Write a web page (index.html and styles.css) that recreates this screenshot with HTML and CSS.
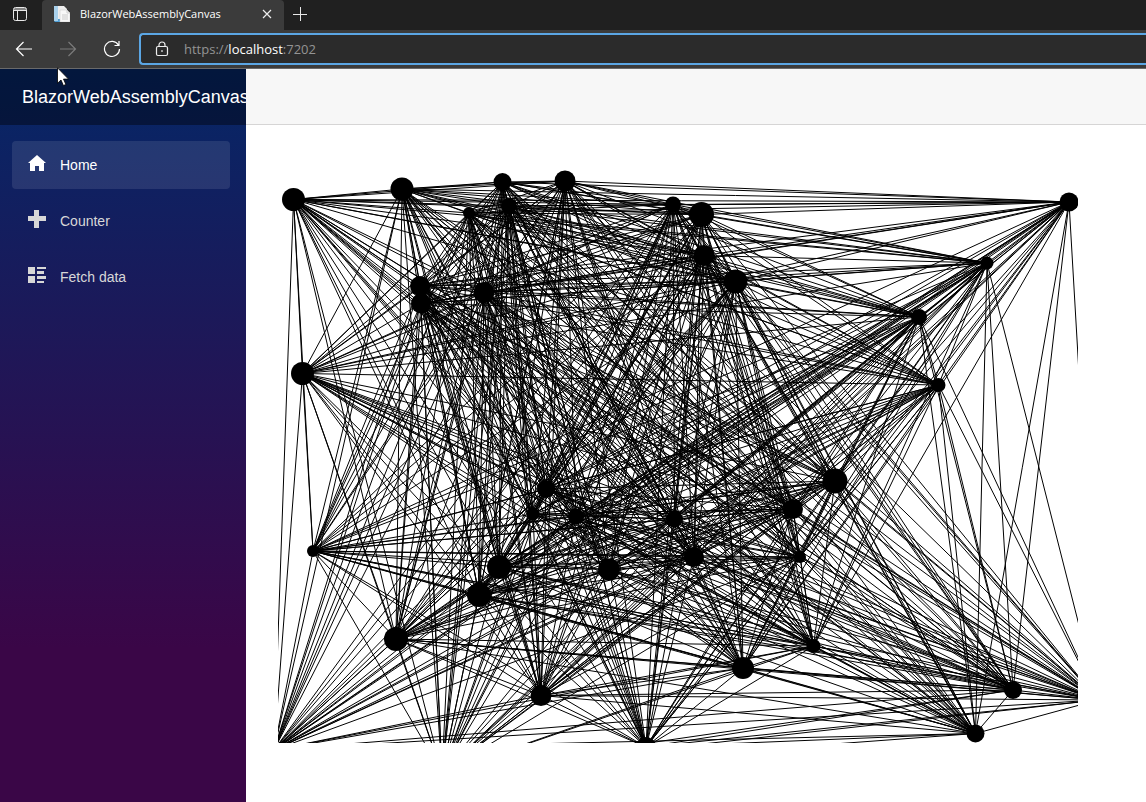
FILE: index.html
```html
<!DOCTYPE html>
<html lang="en">
<head>
<meta charset="utf-8">
<title>BlazorWebAssemblyCanvas</title>
<link rel="stylesheet" href="styles.css">
</head>
<body>
<div class="browser">
  <div class="tab-strip">
    <button class="tab-actions" type="button" aria-label="Tab actions">
      <svg width="16" height="16" viewBox="0 0 16 16" fill="none" stroke="#e8e8e8"><rect x="1.5" y="1.5" width="13" height="13" rx="2"/><path d="M2 3h12M2 4.500h12M5.500 5v9" /></svg>
    </button>
    <div class="tab">
      <svg width="16" height="16" viewBox="0 0 16 16"><path d="M0 0h7v16H1l-1-1z" fill="#4f9fd6"/><path d="M0 0h4v15H0z" fill="#a9d1ec"/><path d="M4 0h6l3 3v10H4z" fill="#eee"/><path d="M6 4h7l3 3v9H6z" fill="#f8f8f8" stroke="#c8c8c8" stroke-width=".5"/><path d="M13 4v3h3M8 9h6M8 11h6M8 13h6" fill="none" stroke="#ccc"/></svg>
      <span class="tab-title">BlazorWebAssemblyCanvas</span>
      <button class="tab-close" type="button" aria-label="Close tab">
        <svg width="10" height="10" viewBox="0 0 10 10" stroke="#eee" stroke-width="1.2"><path d="M1 1l8 8M9 1L1 9"/></svg>
      </button>
    </div>
    <button class="new-tab" type="button" aria-label="New tab">
      <svg width="14" height="14" viewBox="0 0 14 14" stroke="#e8e8e8"><path d="M0 7.500h14M7.500 0v14"/></svg>
    </button>
  </div>
  <div class="toolbar">
    <button type="button" aria-label="Back"><svg width="18" height="16" viewBox="0 0 18 16" fill="none" stroke="#fff" stroke-width="1.200"><path d="M17 8H1.500M8.500 1L1.500 8l7 7"/></svg></button>
    <button type="button" aria-label="Forward" disabled><svg width="18" height="16" viewBox="0 0 18 16" fill="none" stroke="#7b7b7b" stroke-width="1.200"><path d="M1 8h15.500M9.500 1l7 7-7 7"/></svg></button>
    <button type="button" aria-label="Refresh"><svg width="18" height="18" viewBox="0 0 18 18" fill="none" stroke="#fff" stroke-width="1.200"><path d="M15.500 5.200A7.500 7.500 0 1 0 16.500 9M16 1v4.500h-4.500"/></svg></button>
    <div class="address">
      <svg width="14" height="16" viewBox="0 0 14 16" fill="none" stroke="#eee" stroke-width="1.200"><rect x="1.500" y="5.500" width="11" height="9" rx="1.500"/><path d="M4 5.500V4a3 3 0 0 1 6 0v1.500"/><circle cx="7" cy="10" r=".6" fill="#eee" stroke-width=".6"/></svg>
      <div class="url" role="textbox" aria-label="Address" contenteditable="true" spellcheck="false">https://<span class="host">localhost</span>:7202</div>
    </div>
  </div>
  <svg class="pointer" width="12" height="20" viewBox="0 0 12 20"><path d="M.5.8v15.500l3.500-3.300 2.400 5.500 2.500-1-2.400-5.400h5z" fill="#fff" stroke="#000" stroke-width=".8"/></svg>
</div>
<div class="page">
  <div class="sidebar">
    <div class="brand-row"><a class="brand" href="#">BlazorWebAssemblyCanvas</a></div>
    <nav class="nav">
      <a class="nav-link active" href="#">
        <svg width="20" height="18" viewBox="0 0 20 18" fill="currentColor"><path d="M10 1L1 9h2v8h5v-5h4v5h5V9h2z"/></svg>Home</a>
      <a class="nav-link" href="#">
        <svg width="20" height="18" viewBox="0 0 20 18" fill="currentColor"><path d="M7 0h5v6h7v5h-7v7H7v-7H1V6h6z"/></svg>Counter</a>
      <a class="nav-link" href="#">
        <svg width="20" height="18" viewBox="0 0 20 18" fill="currentColor"><path d="M1 1h7v7H1zM1 10h7v7H1zM10 1h9v2h-9zM10 5h7v3h-7zM10 10h9v3h-9zM10 15h7v2h-7z"/></svg>Fetch data</a>
    </nav>
  </div>
  <main class="main">
    <div class="top-row"></div>
    <article class="content">
      <canvas id="network" width="800" height="600" aria-label="Network of connected dots"></canvas>
    </article>
  </main>
</div>
<script src="network.js"></script>
</body>
</html>
```
FILE: styles.css
```css
* { box-sizing: border-box; }
body {
  margin: 0;
  min-height: 100vh;
  display: flex;
  flex-direction: column;
  background: #fff;
  font-family: "Liberation Sans", Arial, sans-serif;
}
button {
  display: flex;
  align-items: center;
  justify-content: center;
  padding: 0;
  border: 0;
  background: none;
}
svg { flex: none; }
.browser {
  position: relative;
  font-family: "Open Sans", "Noto Sans", sans-serif;
  color: #fff;
  background: #3b3b3b;
  border-bottom: 1px solid #6a6a6a;
}
.tab-strip {
  display: flex;
  height: 30px;
  background: #202020;
}
.tab-actions { width: 40px; height: 28px; }
.tab {
  display: flex;
  align-items: center;
  width: 242px;
  height: 30px;
  margin-left: 2px;
  padding: 0 12px 2px;
  gap: 10px;
  background: #3b3b3b;
  border-radius: 4px 4px 0 0;
}
.tab-title { flex: 1; font-size: 11px; line-height: 16px; }
.tab-close { width: 10px; height: 16px; }
.new-tab { width: 32px; height: 28px; }
.toolbar {
  display: flex;
  align-items: center;
  height: 38px;
  padding-left: 2px;
}
.toolbar button { width: 44px; height: 36px; }
.address {
  display: flex;
  flex: 1;
  align-items: center;
  height: 32px;
  margin-left: 5px;
  padding-left: 14px;
  gap: 15px;
  background: #2b2b2b;
  border: 2px solid #5ba6e4;
  border-right: 0;
  border-radius: 4px 0 0 4px;
}
.url { flex: 1; font-size: 13px; line-height: 20px; color: #949494; outline: 0; }
.host { color: #fff; }
.pointer { position: absolute; left: 57px; top: 67px; z-index: 2; }
.page { display: flex; flex: 1; }
.sidebar {
  flex: none;
  width: 246px;
  background: linear-gradient(180deg, #052767 0%, #3a0647 79%);
}
.brand-row {
  display: flex;
  align-items: center;
  height: 56px;
  padding-left: 22px;
  background: rgba(0, 0, 0, 0.4);
}
.brand { font-size: 18px; color: #fff; text-decoration: none; }
.nav {
  display: flex;
  flex-direction: column;
  gap: 8px;
  padding: 16px 16px 16px 12px;
}
.nav-link {
  display: flex;
  align-items: center;
  height: 48px;
  padding: 0 15px;
  gap: 13px;
  border-radius: 4px;
  font-size: 14px;
  color: #d7d7d7;
  text-decoration: none;
}
.nav-link svg { margin-bottom: 4px; }
.nav-link.active { color: #fff; background: rgba(255, 255, 255, 0.1); }
.main { flex: 1; min-width: 0; }
.top-row {
  height: 56px;
  background: #f7f7f7;
  border-bottom: 1px solid #d6d5d5;
}
.content { padding: 18px 24px 0 32px; }
.content canvas { display: block; }
```
FILE: network.js
```js
// Each dot is [x, y, radius] on the 800 by 600 canvas.
const dots = [
  [15.5, 56.5, 11.5], [124, 46, 11.5], [224.5, 39, 9], [287, 38, 10.5],
  [191, 70, 6], [231, 63, 8], [395, 61.5, 8], [423.5, 71.5, 12.5],
  [426, 112.5, 10.5], [457.5, 138.5, 12], [142, 143, 10], [143, 160.5, 10],
  [206, 149.5, 10.5], [791, 59, 9.5], [709, 120, 6.5], [641, 174, 8],
  [660.5, 242, 7], [24.5, 230.5, 11.5], [35, 408, 6], [268, 346, 9],
  [255, 371, 6.5], [298, 373.5, 8], [396.5, 376, 8.5], [515, 366, 10],
  [557, 338, 12.5], [416, 414, 10], [522, 414, 6], [331, 426.5, 11],
  [221, 424, 12], [201, 452, 12], [118, 496, 12], [263, 552.5, 10.5],
  [465, 525, 11], [535.5, 503, 7], [735, 547, 9], [697.5, 590.5, 9],
  [368, 604, 10], [-4, 607, 3], [164, 630, 8], [820, 557, 8]
];

const context = document.getElementById("network").getContext("2d");

// Join every dot to every other dot.
dots.forEach(([x1, y1], index) => {
  dots.slice(index + 1).forEach(([x2, y2]) => {
    context.beginPath();
    context.moveTo(x1, y1);
    context.lineTo(x2, y2);
    context.stroke();
  });
});

dots.forEach(([x, y, radius]) => {
  context.beginPath();
  context.arc(x, y, radius, 0, Math.PI * 2);
  context.fill();
});
```
